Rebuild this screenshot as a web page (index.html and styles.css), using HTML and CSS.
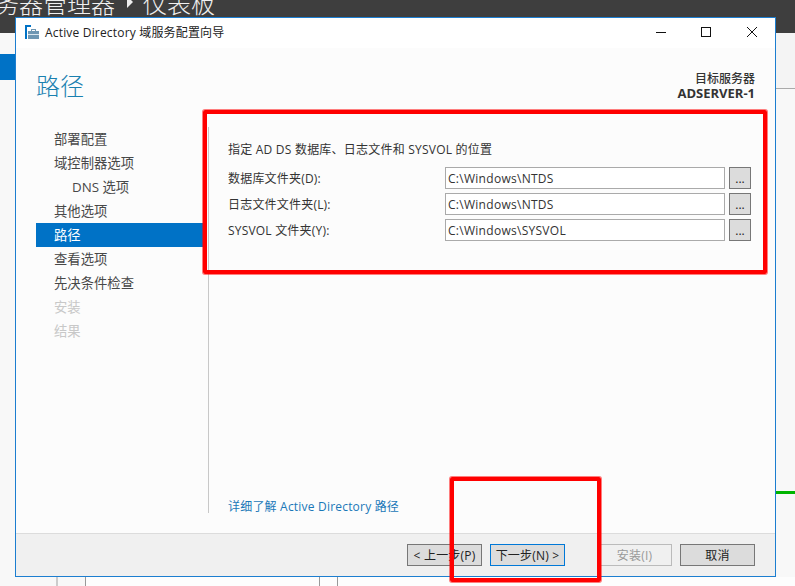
FILE: index.html
```html
<!DOCTYPE html>
<html lang="zh-CN">
<head>
<meta charset="utf-8">
<title>Active Directory 域服务配置向导</title>
<link rel="stylesheet" href="styles.css">
</head>
<body>
<header class="topbar"><span class="crumb">务器管理器</span><span class="arrow"></span><span class="crumb">仪表板</span></header>
<div class="right-band"></div>
<div class="nav-selected"></div>
<div class="right-rule"></div>
<div class="right-green"></div>
<div class="bottom-band"></div>
<div class="bottom-line l1"></div>
<div class="bottom-line l2"></div>
<div class="bottom-line l3"></div>
<div class="bottom-line l4"></div>
<main class="window">
  <div class="titlebar">
    <svg class="app-icon" width="14" height="14" viewBox="0 0 14 14"><rect x="0" y="0" width="6" height="2" fill="#0072c6"/><rect x="0" y="2" width="2" height="12" fill="#0072c6"/><rect x="3" y="6" width="11" height="8" fill="#6f97b3"/><rect x="3" y="9" width="11" height="1" fill="#dbe7ef"/><rect x="6.500" y="4.500" width="4" height="2" fill="none" stroke="#6f97b3"/></svg>
    <span class="title">Active Directory 域服务配置向导</span>
    <div class="controls">
      <svg width="12" height="12" viewBox="0 0 12 12"><path d="M2 5.500H12" stroke="#111" fill="none"/></svg>
      <svg width="12" height="12" viewBox="0 0 12 12"><rect x="1.500" y="0.500" width="9" height="9" stroke="#111" fill="none"/></svg>
      <svg width="12" height="12" viewBox="0 0 12 12"><path d="M1 0L11 10M11 0L1 10" stroke="#111" fill="none"/></svg>
    </div>
  </div>
  <div class="head">
    <h1>路径</h1>
    <div class="target"><div>目标服务器</div><div class="server">ADSERVER-1</div></div>
  </div>
  <div class="body">
    <nav class="steps">
      <div class="step">部署配置</div>
      <div class="step">域控制器选项</div>
      <div class="step sub">DNS 选项</div>
      <div class="step">其他选项</div>
      <div class="step active">路径</div>
      <div class="step">查看选项</div>
      <div class="step">先决条件检查</div>
      <div class="step off">安装</div>
      <div class="step off">结果</div>
    </nav>
    <section class="content">
      <p class="lead">指定 AD DS 数据库、日志文件和 SYSVOL 的位置</p>
      <div class="row"><label>数据库文件夹(D):</label><div class="field">C:\Windows\NTDS</div><button class="browse">...</button></div>
      <div class="row"><label>日志文件文件夹(L):</label><div class="field">C:\Windows\NTDS</div><button class="browse">...</button></div>
      <div class="row"><label>SYSVOL 文件夹(Y):</label><div class="field">C:\Windows\SYSVOL</div><button class="browse">...</button></div>
      <a class="more">详细了解 Active Directory 路径</a>
    </section>
  </div>
  <footer class="foot">
    <button class="btn">&lt; 上一步(P)</button>
    <button class="btn primary">下一步(N) &gt;</button>
    <button class="btn off install">安装(I)</button>
    <button class="btn cancel">取消</button>
  </footer>
</main>
<div class="mark mark-a"></div>
<div class="mark mark-b"></div>
</body>
</html>
```
FILE: styles.css
```css
* { box-sizing: border-box; }
html, body { margin: 0; width: 795px; height: 586px; overflow: hidden; }
body { position: relative; background: #f8f8f8; font-family: "Open Sans", "Noto Sans CJK SC", sans-serif; font-size: 12px; color: #333; }
.topbar { height: 33px; background: #3e3e3e; color: #f0f0f0; font-family: "Noto Sans CJK SC", sans-serif; font-weight: 300; font-size: 24px; line-height: 6px; display: flex; align-items: flex-start; white-space: nowrap; margin-left: -5px; overflow: hidden; }
.arrow { width: 0; height: 0; margin: -4px 10px 0 12px; border-left: 6px solid #eee; border-top: 6px solid transparent; border-bottom: 6px solid transparent; }
.right-band { position: absolute; left: 776px; top: 33px; width: 19px; height: 55px; background: #f4f4f4; }
.nav-selected { position: absolute; left: 0; top: 54px; width: 15px; height: 26px; background: #0072c6; }
.right-rule { position: absolute; left: 776px; top: 88px; width: 19px; height: 1px; background: #aaa; }
.right-green { position: absolute; left: 776px; top: 491px; width: 19px; height: 3px; background: #00b400; }
.bottom-band { position: absolute; left: 85px; top: 577px; width: 710px; height: 9px; background: #fdfdfd; }
.bottom-line { position: absolute; top: 577px; width: 1px; height: 9px; background: #999; }
.l1 { left: 56px; width: 2px; background: #ccc; } .l2 { left: 85px; } .l3 { left: 319px; } .l4 { left: 337px; }
.window { position: absolute; left: 15px; top: 17px; width: 761px; height: 560px; background: #fcfcfc; border: 1px solid #1c7ed0; display: flex; flex-direction: column; }
.titlebar { height: 30px; background: #fff; display: flex; align-items: center; padding-left: 9px; flex: none; }
.app-icon { margin: -2px 6px 0 0; }
.title { font-size: 12px; line-height: 16px; margin-top: -1px; color: #222; letter-spacing: 0.18px; }
.controls { margin-left: auto; display: flex; gap: 34px; padding-right: 17px; }
.head { height: 58px; flex: none; padding: 0 20px; display: flex; justify-content: space-between; align-items: flex-start; }
h1 { margin: 19px 0 0; font-family: "Noto Sans CJK SC", sans-serif; font-weight: 300; font-size: 24px; line-height: 36px; color: #1a80b0; }
.target { text-align: right; font-size: 12px; line-height: 15px; padding-top: 23px; color: #333; font-weight: 500; }
.server { font-size: 13px; font-weight: 700; }
.body { flex: 1; display: flex; min-height: 0; }
.steps { width: 192px; padding: 21px 1px 0 20px; flex: none; }
.step { height: 24px; line-height: 24px; padding-left: 18px; font-size: 13.33px; color: #484848; }
.step.sub { padding-left: 36px; }
.step.active { background: #0072c6; color: #fff; }
.step.off { color: #c8c8c8; }
.content { flex: 1; margin: 21px 0 20px; padding: 11px 0 0 19px; border-left: 1px solid #c8c8c8; display: flex; flex-direction: column; }
.lead { margin: 0 0 5px; height: 24px; line-height: 24px; font-size: 12px; color: #333; letter-spacing: 0.22px; }
.row { display: flex; align-items: center; height: 22px; margin-bottom: 4px; }
.row label { width: 217px; flex: none; color: #333; line-height: 20px; padding-top: 1px; letter-spacing: 0.2px; }
.field { width: 280px; height: 22px; line-height: 22px; border: 1px solid #aaa; background: #fff; padding-left: 2px; color: #333; letter-spacing: 0.28px; }
.browse { width: 22px; height: 22px; margin-left: 4px; background: #dcdcdc; border: 1px solid #777; padding: 0; font: 12px "Open Sans", sans-serif; color: #222; }
.more { margin-top: auto; margin-bottom: -2px; line-height: 16px; color: #1a78b8; font-size: 12px; letter-spacing: 0.2px; }
.foot { height: 43px; flex: none; background: #f0f0f0; border-top: 1px solid #dcdcdc; display: flex; align-items: flex-start; padding-top: 10px; padding-left: 391px; }
.btn { width: 75px; height: 22px; background: #dcdcdc; border: 1px solid #777; padding: 1px 0 0; font: 12px "Open Sans", "Noto Sans CJK SC", sans-serif; color: #222; line-height: 18px; letter-spacing: 0.2px; }
.primary { border-color: #0078d7; margin-left: 8px; }
.btn.off { background: #f0f0f0; border-color: #bbb; color: #999; }
.install { margin-left: 32px; }
.cancel { margin-left: 8px; }
.mark { position: absolute; border: 4px solid #f00; border-radius: 2px; box-shadow: 0 0 0 1px rgba(255, 0, 0, 0.5); }
.mark-a { left: 203px; top: 110px; width: 564px; height: 164px; }
.mark-b { left: 450px; top: 477px; width: 151px; height: 105px; }
```
